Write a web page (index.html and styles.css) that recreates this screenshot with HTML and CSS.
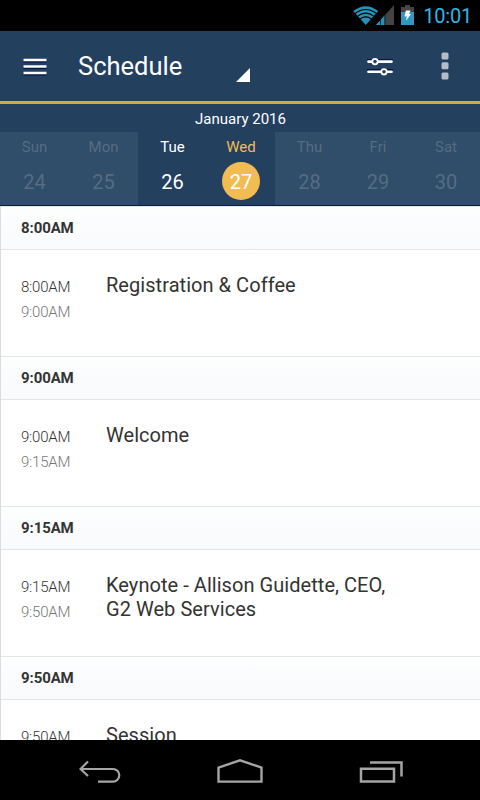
FILE: index.html
```html
<!DOCTYPE html>
<html lang="en">
<head>
  <meta charset="UTF-8">
  <meta name="viewport" content="width=device-width, initial-scale=1.0">
  <title>Schedule</title>
  <link rel="stylesheet" href="styles.css">
</head>
<body>

<div class="status-bar">
  <svg class="wifi" width="26" height="20" viewBox="0 0 26 20">
    <path d="M0.2 6Q13 -3.5 25.2 6L12.7 20Z" fill="#2592ba"/>
    <g fill="none" stroke="#000" stroke-width="1.1">
      <path d="M2 8.6Q12.7 0.5 23.5 8.6"/>
      <path d="M4.4 11.4Q12.7 4.8 21 11.4"/>
      <path d="M6.8 14.2Q12.7 9.5 18.6 14.2"/>
    </g>
  </svg>
  <svg class="signal" width="18" height="20" viewBox="0 0 18 20">
    <path d="M18 0V20H0Z" fill="#444"/>
    <path d="M9 10V20H0Z" fill="#2592ba"/>
    <path d="M4.5 14V20M8.8 9V20" stroke="#000" stroke-width="0.7"/>
  </svg>
  <svg class="battery" width="13" height="20" viewBox="0 0 13 20">
    <path d="M4 0H9V2H13V7H0V2H4Z" fill="#444"/>
    <path d="M0 7H13V20H0Z" fill="#3199c0"/>
    <path d="M4.8 5.5H9.5L8 9H10L4.8 16L5.9 11.5H3.5Z" fill="#fff"/>
  </svg>
  <span class="clock">10:01</span>
</div>

<header class="app-bar">
  <svg class="menu-icon" width="24" height="18" viewBox="0 0 24 18">
    <path d="M0.5 3H23.5M0.5 9.5H23.5M0.5 16H23.5" stroke="#08124a" stroke-width="3"/>
    <path d="M0.5 2H23.5M0.5 8.5H23.5M0.5 15H23.5" stroke="#fff" stroke-width="2.4"/>
  </svg>
  <h1>Schedule</h1>
  <svg class="dropdown-icon" width="14" height="14" viewBox="0 0 14 14">
    <path d="M14 0V14H0Z" fill="#fff"/>
  </svg>
  <svg class="filter-icon" width="26" height="20" viewBox="0 0 26 20">
    <path d="M1 4.5H25M1 14.5H25" stroke="#08124a" stroke-width="3" stroke-linecap="round"/>
    <path d="M1.4 5.6H24.6M1.4 15.8H24.6" stroke="#fff" stroke-width="2.6" stroke-linecap="round"/>
    <g fill="#23405f" stroke="#fff" stroke-width="1.8">
      <circle cx="8" cy="5.6" r="2.7"/>
      <circle cx="17" cy="15.8" r="2.7"/>
    </g>
  </svg>
  <svg class="more-icon" width="8" height="28" viewBox="0 0 8 28">
    <g fill="#b4bdc8">
      <rect x="0.5" y="0.5" width="7" height="7" rx="1.5"/>
      <rect x="0.5" y="10.3" width="7" height="7" rx="1.5"/>
      <rect x="0.5" y="20.5" width="7" height="7" rx="1.5"/>
    </g>
  </svg>
</header>

<div class="calendar">
  <div class="month">January 2016</div>
  <div class="week">
    <div class="day disabled"><span>Sun</span><b>24</b></div>
    <div class="day disabled"><span>Mon</span><b>25</b></div>
    <div class="day"><span>Tue</span><b>26</b></div>
    <div class="day selected"><span>Wed</span><b>27</b></div>
    <div class="day disabled"><span>Thu</span><b>28</b></div>
    <div class="day disabled"><span>Fri</span><b>29</b></div>
    <div class="day disabled"><span>Sat</span><b>30</b></div>
  </div>
</div>

<main class="schedule">
  <h2>8:00AM</h2>
  <div class="event">
    <div class="times"><div>8:00AM</div><div class="end">9:00AM</div></div>
    <div class="title">Registration &amp; Coffee</div>
  </div>
  <h2>9:00AM</h2>
  <div class="event">
    <div class="times"><div>9:00AM</div><div class="end">9:15AM</div></div>
    <div class="title">Welcome</div>
  </div>
  <h2>9:15AM</h2>
  <div class="event">
    <div class="times"><div>9:15AM</div><div class="end">9:50AM</div></div>
    <div class="title">Keynote - Allison Guidette, CEO, G2 Web Services</div>
  </div>
  <h2>9:50AM</h2>
  <div class="event">
    <div class="times"><div>9:50AM</div></div>
    <div class="title">Session</div>
  </div>
</main>

<nav class="nav-bar">
  <svg width="42" height="24" viewBox="0 0 42 24">
    <path d="M1.5 10H34a6.3 6.3 0 0 1 0 12.6H19M9 2.5L1.5 10L9 17" fill="none" stroke="#a5a5a5" stroke-width="2.2"/>
  </svg>
  <svg width="46" height="25" viewBox="0 0 46 25">
    <path d="M1.5 8.6L23 1.3L44.5 8.6V22.6H1.5Z" fill="none" stroke="#a5a5a5" stroke-width="2.4"/>
  </svg>
  <svg width="44" height="24" viewBox="0 0 44 24">
    <path d="M2 9.7H35V22.5H2ZM11 3.5H42.5V17.5" fill="none" stroke="#a5a5a5" stroke-width="2.5"/>
  </svg>
</nav>

</body>
</html>
```

FILE: styles.css
```css
* {
    box-sizing: border-box;
}

body {
    margin: 0;
    height: 800px;
    display: flex;
    flex-direction: column;
    overflow: hidden;
    font-family: Roboto, "Liberation Sans", sans-serif;
    background-color: #fff;
}

svg {
    display: block;
    flex: none;
}

.status-bar {
    flex: none;
    height: 31px;
    display: flex;
    align-items: flex-start;
    padding: 5px 8px 0 353px;
    background-color: #000;
}

.signal {
    margin-left: -3px;
}

.battery {
    margin-left: 7px;
}

.clock {
    margin-left: auto;
    font-size: 20px;
    line-height: 23px;
    letter-spacing: -0.2px;
    color: #33b5e5;
}

.app-bar {
    flex: none;
    height: 73px;
    display: flex;
    align-items: flex-start;
    padding-left: 23px;
    background-color: #23405f;
    border-bottom: 3px solid #d9a441;
}

.menu-icon {
    margin-top: 27px;
}

h1 {
    width: 158px;
    margin: 19px 0 0 31px;
    font-size: 25.5px;
    font-weight: 400;
    line-height: 32px;
    color: #fff;
}

.dropdown-icon {
    margin-top: 37px;
}

.filter-icon {
    margin: 25px 0 0 117px;
}

.more-icon {
    margin: 21px 0 0 48px;
}

.calendar {
    flex: none;
    height: 102px;
    background-color: #23405f;
    border-bottom: 1px solid #0a1a48;
    color: #fff;
    text-align: center;
}

.month {
    height: 28px;
    padding-left: 1px;
    font-size: 15px;
    line-height: 30px;
}

.week {
    display: grid;
    grid-template-columns: 69px 69px 69px 68px 69px 68px 68px;
}

.day {
    height: 73px;
    display: flex;
    flex-direction: column;
    align-items: center;
}

.day span {
    font-size: 15px;
    line-height: 30px;
}

.day b {
    width: 38px;
    height: 38px;
    border-radius: 50%;
    font-size: 20px;
    font-weight: 400;
    line-height: 40px;
}

.disabled {
    background-color: #304d69;
    color: #546c84;
}

.selected span {
    color: #f1bc52;
}

.selected b {
    background-color: #f1bc52;
}

.schedule {
    flex: 1;
    min-height: 0;
    overflow: hidden;
    border-left: 1px solid #dcdcdc;
}

h2 {
    height: 44px;
    margin: 0;
    padding-left: 20px;
    border-top: 1px solid #e3e6e6;
    border-bottom: 1px solid #e3e6e6;
    background-image: linear-gradient(#fdfefe, #f8fafc);
    font-size: 15px;
    font-weight: 700;
    line-height: 42px;
    letter-spacing: -0.1px;
    color: #333;
}

.event {
    height: 106px;
    display: flex;
    padding: 23px 70px 0 20px;
    color: #333;
}

.times {
    flex: none;
    width: 85px;
    padding-top: 1px;
    font-size: 15px;
    font-weight: 300;
    line-height: 26px;
    letter-spacing: -0.2px;
}

.end {
    margin-top: -1px;
    color: #777;
}

.title {
    font-size: 20px;
    line-height: 24px;
    letter-spacing: 0.05px;
}

.nav-bar {
    flex: none;
    height: 60px;
    display: flex;
    justify-content: space-between;
    padding: 19px 77px 0 79px;
    background-color: #000;
}
```
